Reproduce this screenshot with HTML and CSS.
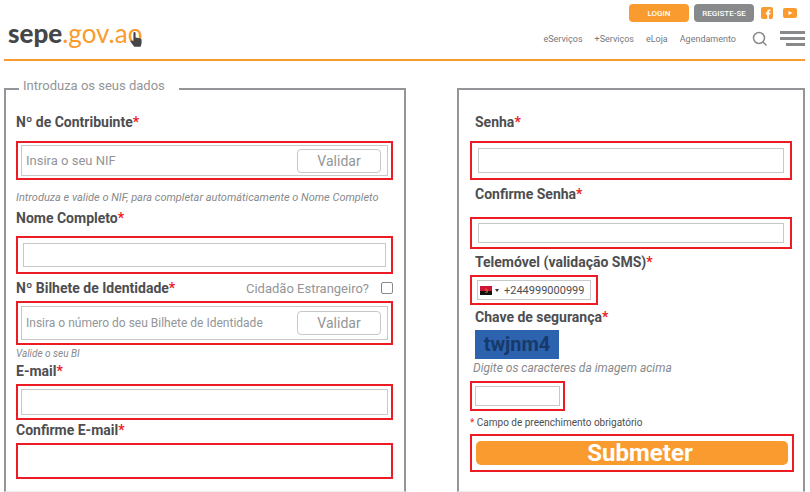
FILE: index.html
```html
<!DOCTYPE html>
<html lang="pt">
<head>
  <meta charset="UTF-8">
  <meta name="viewport" content="width=device-width, initial-scale=1">
  <title>SEPE - Registo</title>
  <link rel="stylesheet" href="styles.css">
</head>
<body>

<header class="topbar">
  <a href="#" class="logo" aria-label="sepe.gov.ao">
    <span class="logo-name">sepe</span><span class="logo-domain">.gov.ao</span>
    <svg class="logo-hand" viewBox="0 0 12 15" width="12" height="15">
      <path fill="#454648" d="M3.4 1.2a1.1 1.1 0 0 1 2.2 0v4.3l5 1.1q1 .3 1 1.300v3.300L10.600 14.800H4.300L.5 9.700q-.4-1 .5-1.300 1-.2 2.400 1.200z"/>
    </svg>
  </a>

  <div class="topbar-right">
    <div class="account">
      <button type="button" class="btn-account btn-login">LOGIN</button>
      <button type="button" class="btn-account btn-register">REGISTE-SE</button>
      <a href="#" class="social" aria-label="Facebook">
        <svg viewBox="0 0 12 12" width="12" height="12">
          <rect width="12" height="12" rx="2" fill="#f99b2f"/>
          <path fill="#fff" d="M6.200 12V7.400H4.800V5.600h1.400V4.400q0-2 2-2h1.300V4H8.600q-.7 0-.7.700v.9h1.600l-.3 1.800H7.900V12z"/>
        </svg>
      </a>
      <a href="#" class="social" aria-label="YouTube">
        <svg viewBox="0 0 14 10" width="14" height="10">
          <rect width="14" height="10" rx="2" fill="#f99b2f"/>
          <path fill="#fff" d="M5.500 3l4 2-4 2z"/>
        </svg>
      </a>
    </div>
    <nav class="menu">
      <a href="#">eServiços</a>
      <a href="#">+Serviços</a>
      <a href="#">eLoja</a>
      <a href="#">Agendamento</a>
      <button type="button" class="btn-icon btn-search" aria-label="Pesquisar">
        <svg viewBox="0 0 16 16" width="16" height="16" fill="none" stroke="#87898b" stroke-width="1.500">
          <circle cx="7" cy="7" r="5.500"/>
          <path d="M11 11l3.500 3.500"/>
        </svg>
      </button>
      <button type="button" class="btn-icon" aria-label="Menu">
        <svg viewBox="0 0 25 16" width="25" height="16" fill="#87898b">
          <rect width="25" height="3"/>
          <rect y="6" width="25" height="3"/>
          <rect x="6" y="12" width="19" height="3"/>
        </svg>
      </button>
    </nav>
  </div>
</header>

<form class="register">
  <fieldset class="panel panel-data">
    <legend>Introduza os seus dados</legend>

    <label class="title" for="nif">Nº de Contribuinte<span class="req">*</span></label>
    <div class="field field-spaced field-check">
      <div class="control">
        <input type="text" id="nif" placeholder="Insira o seu NIF">
        <button type="button" class="btn-validate">Validar</button>
      </div>
    </div>
    <p class="hint hint-nif">Introduza e valide o NIF, para completar automáticamente o Nome Completo</p>

    <label class="title" for="nome">Nome Completo<span class="req">*</span></label>
    <div class="field field-name">
      <input type="text" id="nome" class="control">
    </div>

    <div class="title-row">
      <label class="title" for="bi">Nº Bilhete de Identidade<span class="req">*</span></label>
      <label class="foreign">Cidadão Estrangeiro? <input type="checkbox"></label>
    </div>
    <div class="field field-check field-bi">
      <div class="control">
        <input type="text" id="bi" class="small" placeholder="Insira o número do seu Bilhete de Identidade">
        <button type="button" class="btn-validate">Validar</button>
      </div>
    </div>
    <p class="hint hint-bi">Valide o seu BI</p>

    <label class="title" for="email">E-mail<span class="req">*</span></label>
    <div class="field field-email">
      <input type="email" id="email" class="control">
    </div>

    <label class="title" for="email2">Confirme E-mail<span class="req">*</span></label>
    <div class="field field-email">
      <input type="email" id="email2" class="control control-plain">
    </div>
  </fieldset>

  <fieldset class="panel panel-access">
    <label class="title" for="senha">Senha<span class="req">*</span></label>
    <div class="field field-spaced field-password">
      <input type="password" id="senha" class="control">
    </div>

    <label class="title title-gap" for="senha2">Confirme Senha<span class="req">*</span></label>
    <div class="field field-confirm">
      <input type="password" id="senha2" class="control">
    </div>

    <label class="title" for="telemovel">Telemóvel (validação SMS)<span class="req">*</span></label>
    <div class="field field-phone">
      <div class="control">
        <svg class="flag" viewBox="0 0 12 9" width="12" height="9">
          <rect width="12" height="5" fill="#ce1438"/>
          <rect y="5" width="12" height="4" fill="#111"/>
          <path d="M5 3q3-.5 2.500 2T5 6.500M5 4l3 2.500" fill="none" stroke="#d9962c" stroke-width=".6"/>
        </svg>
        <svg class="caret" viewBox="0 0 4 3" width="4" height="3"><path d="M0 0h4L2 3z" fill="#333"/></svg>
        <input type="tel" id="telemovel" value="+244999000999">
      </div>
    </div>

    <label class="title" for="captcha">Chave de segurança<span class="req">*</span></label>
    <div class="captcha">twjnm4</div>
    <p class="hint hint-captcha">Digite os caracteres da imagem acima</p>
    <div class="field field-captcha">
      <input type="text" id="captcha" class="control">
    </div>

    <p class="note"><span class="req">*</span> Campo de preenchimento obrigatório</p>
    <div class="field field-submit">
      <button type="submit" class="btn-submit">Submeter</button>
    </div>
  </fieldset>
</form>

</body>
</html>
```
FILE: styles.css
```css
* {
  box-sizing: border-box;
}

body {
  margin: 0;
  padding: 0 5px 0 4px;
  font-family: Roboto, "Liberation Sans", sans-serif;
  background: #fff;
  color: #4d4e50;
}

p {
  margin: 0;
}

a {
  color: inherit;
  text-decoration: none;
}

button, input {
  font-family: inherit;
  color: inherit;
}

button {
  padding: 0;
  border: none;
  cursor: pointer;
}

/* header */
.topbar {
  display: flex;
  justify-content: space-between;
  height: 61px;
  border-bottom: 2px solid #f99b2f;
}

.logo {
  position: relative;
  align-self: flex-start;
  margin: 17px 0 0 4px;
  font-family: Lato, sans-serif;
  font-size: 26px;
  line-height: 32px;
  white-space: nowrap;
}

.logo-name {
  font-weight: 900;
  color: #454648;
}

.logo-domain {
  font-weight: 400;
  color: #f99b2f;
}

.logo-hand {
  position: absolute;
  right: 0;
  bottom: 2px;
}

.topbar-right {
  display: flex;
  flex-direction: column;
  align-items: flex-end;
  padding-top: 4px;
}

.account {
  display: flex;
  align-items: center;
  gap: 5px;
  padding-right: 8px;
}

.btn-account {
  width: 60px;
  height: 18px;
  border-radius: 4px;
  color: #fff;
  font-size: 8px;
  font-weight: 500;
}

.btn-login {
  background: #f99b2f;
}

.btn-register {
  background: #87898b;
}

.social {
  display: flex;
  margin-left: 2px;
}

.social + .social {
  margin-left: 5px;
}

.menu {
  display: flex;
  align-items: center;
  gap: 12px;
  margin-top: 9px;
  font-size: 9px;
  color: #77787b;
}

.btn-icon {
  display: flex;
  background: none;
}

.btn-search {
  margin-left: 4px;
}

/* form panels */
.register {
  display: grid;
  grid-template-columns: 402fr 348fr;
  gap: 51px;
  padding-top: 17px;
}

.panel {
  min-width: 0;
  margin: 0;
  border: 2px solid #939598;
  border-bottom: 1px solid #eee;
}

.panel-data {
  padding: 12px 11px 12px 10px;
}

.panel-access {
  margin-top: 10px;
  padding: 22px 9px 12px 11px;
}

legend {
  margin-left: 3px;
  padding: 0 14px 6px 4px;
  font-size: 13px;
  line-height: 16px;
  color: #939598;
}

.title {
  display: block;
  font-size: 14px;
  font-weight: 700;
  line-height: 20px;
}

.title-gap {
  margin-top: 4px;
}

.req {
  color: #ed1c24;
}

.title-row {
  display: flex;
  justify-content: space-between;
  align-items: center;
  margin-top: 4px;
}

.foreign {
  display: flex;
  align-items: center;
  gap: 12px;
  font-size: 13px;
  color: #939598;
}

.foreign input {
  appearance: none;
  width: 12px;
  height: 12px;
  margin: 0;
  border: 1px solid #87898b;
  border-radius: 2px;
}

.field {
  display: flex;
  margin-top: 3px;
  border: 2px solid #ed1c24;
}

.field-spaced {
  margin-top: 9px;
}

.control {
  flex: 1;
  min-width: 0;
  padding: 0 4px;
  border: 1px solid #c7c8ca;
  background: #fff;
}

.control-plain {
  border-color: transparent;
}

div.control {
  display: flex;
  align-items: center;
}

.control input {
  flex: 1;
  min-width: 0;
  padding: 0;
  border: none;
  background: none;
  font-size: 13px;
}

.control .small {
  font-size: 12px;
}

input::placeholder {
  color: #939598;
}

input:focus {
  outline: none;
}

.field-check {
  height: 39px;
  padding: 2px 3px;
}

.field-check .control {
  padding-right: 6px;
}

.field-bi {
  height: 44px;
  padding: 3px;
}

.field-name {
  height: 38px;
  margin-top: 8px;
  padding: 5px;
}

.field-email {
  height: 36px;
  padding: 3px;
}

.btn-validate {
  width: 84px;
  height: 24px;
  border: 1px solid #c7c8ca;
  border-radius: 4px;
  background: #fff;
  color: #939598;
  font-size: 14px;
}

.hint {
  font-size: 11px;
  font-style: italic;
  line-height: 14px;
  color: #87898b;
}

.hint-nif {
  margin: 11px 0 3px;
}

.hint-bi {
  margin-top: 2px;
  font-size: 10px;
}

/* access panel */
.panel-access .title {
  padding-left: 5px;
}

.field-password,
.field-confirm {
  margin-right: 2px;
}

.field-password {
  height: 39px;
  padding: 5px 6px;
}

.field-confirm {
  height: 32px;
  margin-top: 13px;
  margin-bottom: 3px;
  padding: 4px 6px;
}

.field-phone {
  width: 128px;
  height: 30px;
  margin-bottom: 2px;
  padding: 3px 5px;
}

.field-phone .control {
  padding: 0 2px;
}

.field-phone input {
  font-size: 11px;
}

.caret {
  margin: 0 5px 0 3px;
}

.captcha {
  width: 84px;
  height: 29px;
  margin: 3px 0 0 5px;
  background: #2c62ae;
  color: #173a6b;
  font-size: 20px;
  font-weight: 700;
  line-height: 28px;
  text-align: center;
}

.hint-captcha {
  margin: 2px 0 6px 3px;
  font-size: 12px;
}

.field-captcha {
  width: 95px;
  height: 30px;
  padding: 3px;
}

.note {
  margin-top: 5px;
  font-size: 10px;
  line-height: 14px;
}

.field-submit {
  height: 38px;
  margin-top: 4px;
  padding: 5px 4px;
}

.btn-submit {
  flex: 1;
  padding-left: 16px;
  border-radius: 5px;
  background: #f99b2f;
  color: #fff;
  font-size: 24px;
  font-weight: 700;
  line-height: 24px;
}
```
